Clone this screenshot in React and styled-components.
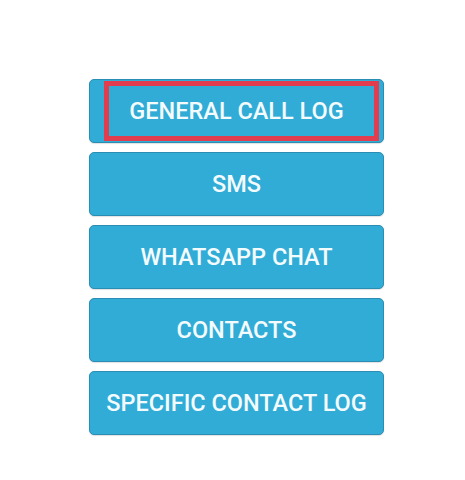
import styled, { createGlobalStyle } from "styled-components";

const GlobalStyle = createGlobalStyle`
  body {
    margin: 0;
    background: #ffffff;
    font-family: Roboto, "Liberation Sans", sans-serif;
  }
`;

const items = [
  { label: "GENERAL CALL LOG", marked: true },
  { label: "SMS" },
  { label: "WHATSAPP CHAT" },
  { label: "CONTACTS" },
  { label: "SPECIFIC CONTACT LOG" },
];

const App = () => {
  return (
    <>
      <GlobalStyle />
      <Page>
        <Menu>
          {items.map((item) => (
            <MenuButton key={item.label}>
              {item.marked && <Highlight />}
              <Label>{item.label}</Label>
            </MenuButton>
          ))}
        </Menu>
      </Page>
    </>
  );
};

const Page = styled.div`
  width: 465px;
  height: 480px;
  display: flex;
  justify-content: center;
  padding-top: 79px;
  box-sizing: border-box;
`;

const Menu = styled.div`
  display: flex;
  flex-direction: column;
  gap: 9px;
  width: 295px;
  margin-left: 8px;
`;

const MenuButton = styled.button`
  position: relative;
  height: 64px;
  width: 100%;
  border: 1px solid #2a8db3;
  border-radius: 5px;
  background: #30acd7;
  color: #ffffff;
  display: flex;
  align-items: center;
  justify-content: center;
  padding: 0;
  box-shadow: 0 1px 1px rgba(0, 0, 0, 0.12);
  cursor: pointer;
`;

const Label = styled.span`
  font-family: Roboto, "Liberation Sans", sans-serif;
  font-size: 23.5px;
  font-weight: 500;
  color: #f4fbfd;
`;

const Highlight = styled.div`
  position: absolute;
  left: 14px;
  right: 4px;
  top: 1px;
  bottom: 1px;
  border: 5px solid #e23d4f;
  pointer-events: none;
`;

export default App;
